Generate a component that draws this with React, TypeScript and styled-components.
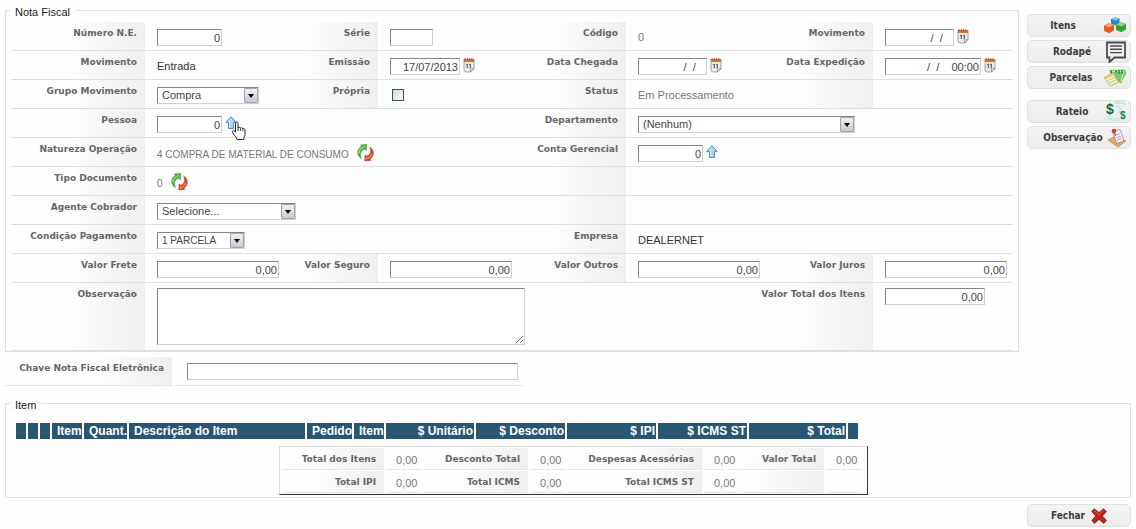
import React from "react";
import styled, { createGlobalStyle } from "styled-components";

const sans = `"Liberation Sans", Arial, sans-serif`;
const verdana = `"DejaVu Sans", Verdana, sans-serif`;

const GlobalStyle = createGlobalStyle`
  *, *::before, *::after { box-sizing: border-box; }
  body { margin: 0; background: #fefefe; color: #333; font: 11px/14px ${sans}; }
`;

const Page = styled.main`
  display: flex;
  flex-direction: column;
  padding: 0 5px;
`;

const Top = styled.div`
  display: flex;
  align-items: flex-start;
  gap: 8px;
`;

const Group = styled.fieldset`
  flex: 1;
  min-width: 0;
  margin: 2px 0 0;
  padding: 4px 5px 0;
  border: 1px solid #e0e0e0;
`;

const ItemGroup = styled(Group)`
  margin-top: 9px;
  padding: 12px 5px 2px;
`;

const Legend = styled.legend`
  margin-left: -1px;
  padding: 4px 5px 0;
  color: #222;
  font-size: 11px;
  line-height: 12px;
`;

const Row = styled.div<{ $tall?: boolean }>`
  display: grid;
  grid-template-columns:
    134px minmax(0, 135fr) 98px minmax(0, 144fr) 104px minmax(0, 134fr)
    113px minmax(0, 140fr);
  height: ${(p) => (p.$tall ? 68 : 29)}px;
  border-bottom: 1px solid #dedede;
`;

const labelLook = `
  padding: 4px 8px 0 0;
  background: linear-gradient(to left, #efefef, #fefefe 76px);
  color: #666;
  font: bold 9px/14px ${verdana};
  text-align: right;
  white-space: nowrap;
`;

const Label = styled.label`
  ${labelLook}
`;

const Caption = styled.span`
  ${labelLook}
`;

const Value = styled.div<{ $span?: number; $bottom?: boolean; $tight?: boolean }>`
  grid-column: span ${(p) => p.$span ?? 1};
  display: flex;
  align-items: ${(p) => (p.$bottom ? "flex-end" : "flex-start")};
  gap: ${(p) => (p.$bottom ? 8 : 3)}px;
  padding: ${(p) => (p.$bottom ? "4px 0 4px 12px" : p.$tight ? "5px 0 0 12px" : "7px 0 0 12px")};
  white-space: nowrap;
`;

const Text = styled.span<{ $dark?: boolean; $caps?: boolean }>`
  color: ${(p) => (p.$dark ? "#333" : "#777")};
  font-size: ${(p) => (p.$caps ? 10 : 11)}px;
  line-height: ${(p) => (p.$caps ? 14 : 17)}px;
`;

const boxLook = `
  margin: 0;
  border: 1px solid;
  border-color: #858585 #cfcfcf #cfcfcf #858585;
  border-radius: 0;
  background: #fff;
  color: #444;
`;

const Field = styled.input<{ $w: number }>`
  ${boxLook}
  width: ${(p) => p.$w}px;
  height: 17px;
  padding: 0 1px;
  font: 11px/15px ${sans};
  text-align: right;
`;

const Area = styled.textarea`
  ${boxLook}
  width: 368px;
  height: 57px;
  padding: 2px;
  font: 11px/14px ${sans};
`;

const Tick = styled.input`
  appearance: none;
  width: 12px;
  height: 12px;
  margin: 2px;
  border: 1px solid #2b567c;
  background: linear-gradient(135deg, #d9dbd8, #fbfbfb);
`;

const Picker = styled.span<{ $w: number }>`
  position: relative;
  display: block;
  width: ${(p) => p.$w}px;
  height: 17px;
`;

const Choice = styled.select<{ $caps?: boolean }>`
  ${boxLook}
  appearance: none;
  width: 100%;
  height: 17px;
  padding: 0 16px 0 4px;
  font: ${(p) => (p.$caps ? 10 : 11)}px/15px ${sans};
`;

const Drop = styled.span`
  position: absolute;
  top: 1px;
  right: 1px;
  display: grid;
  place-items: center;
  width: 14px;
  height: 15px;
  border: 1px solid #a3a3b0;
  border-radius: 1px;
  background: linear-gradient(#f1f1f4, #c9c9d4);
  pointer-events: none;
  &::after {
    content: "";
    border: 3px solid transparent;
    border-top: 4px solid #000;
    border-bottom: 0;
  }
`;

const IconButton = styled.button`
  position: relative;
  display: block;
  padding: 0;
  border: 0;
  background: none;
  line-height: 0;
  cursor: pointer;
`;

const Hand = styled.svg`
  position: absolute;
  top: 5px;
  left: 6px;
`;

const Side = styled.nav`
  display: flex;
  flex-direction: column;
  gap: 11px;
  width: 104px;
  padding-top: 14px;
`;

const SideGroup = styled.div`
  display: flex;
  flex-direction: column;
  gap: 3px;
`;

const buttonLook = `
  display: flex;
  align-items: center;
  width: 104px;
  height: 23px;
  border: 1px solid #e0e0e0;
  border-radius: 5px;
  background: linear-gradient(#f3f3f3, #ececec);
  color: #3c3c3c;
  font: bold 10px/14px "DejaVu Sans Condensed", "DejaVu Sans", Tahoma, sans-serif;
  cursor: pointer;
`;

const SideButton = styled.button<{ $gap?: number }>`
  ${buttonLook}
  padding: 0 3px 0 11px;
  span {
    flex: 1;
    padding-right: ${(p) => p.$gap ?? 0}px;
    text-align: center;
  }
  svg { flex: none; }
`;

const CloseButton = styled.button`
  ${buttonLook}
  justify-content: center;
  gap: 6px;
  align-self: flex-end;
  margin-top: 6px;
`;

const KeyRow = styled.div`
  display: flex;
  gap: 2px;
  height: 29px;
  margin-top: 5px;
`;

const KeyLabel = styled(Label)`
  width: 167px;
  border-bottom: 1px solid #e6e6e6;
`;

const KeyValue = styled.div`
  width: 349px;
  padding: 6px 0 0 13px;
  border-bottom: 1px solid #e6e6e6;
`;

const ItemBlock = styled.div`
  display: flex;
  flex-direction: column;
  gap: 7px;
  width: 854px;
  margin-left: 3px;
`;

const ItemTable = styled.table`
  width: 846px;
  table-layout: fixed;
  border-collapse: separate;
  border-spacing: 2px 0;
`;

const HeadCell = styled.th<{ $w: number; $right?: boolean }>`
  width: ${(p) => p.$w}px;
  height: 16px;
  padding: 0 ${(p) => (p.$right ? 1 : 0)}px 0 ${(p) => (p.$right ? 0 : 5)}px;
  background: #2a5672;
  color: #fff;
  font: bold 12px/16px ${sans};
  text-align: ${(p) => (p.$right ? "right" : "left")};
  white-space: nowrap;
`;

const Totals = styled.table`
  width: 589px;
  margin-left: auto;
  padding-right: 3px;
  table-layout: fixed;
  border: 1px solid;
  border-color: #dcdcdc #333 #333 #dcdcdc;
  border-collapse: separate;
  border-spacing: 2px 1px;
`;

const TotalLabel = styled.th<{ $w: number }>`
  ${labelLook}
  width: ${(p) => p.$w}px;
  height: 22px;
  padding-top: 0;
  border-bottom: 1px solid #e8e8e8;
`;

const TotalValue = styled.td`
  width: 36px;
  height: 22px;
  padding: 2px 0 0 10px;
  border-bottom: 1px solid #e8e8e8;
  color: #777;
  font: 11px/14px ${sans};
`;

const CalendarIcon = () => (
  <svg width="12" height="15" viewBox="0 0 12 15">
    <path d="M1 3.500h10v7L7.500 14H3.500a2.500 2.500 0 0 1-2.500-2.500z" fill="#ececea" stroke="#8b8b88" strokeWidth=".8" />
    <path d="M7.500 14c.3-1.500 0-2.500-.4-3.300 1.400.5 2.700.3 3.900-.2z" fill="#fff" stroke="#777" strokeWidth=".7" />
    <path d="M.6 1h10.800v3H.6z" fill="#d9743a" />
    <path d="M2 0v2.500M4.300 0v2.500M6.600 0v2.500M8.900 0v2.500" stroke="#a8481c" strokeWidth=".9" />
    <path d="M3.300 6.600l1-.6v4M6.300 6.600l1-.6v4" fill="none" stroke="#444" strokeWidth="1" />
  </svg>
);

const UpIcon = () => (
  <svg width="12" height="14" viewBox="0 0 12 14">
    <path d="M6 .8L11.200 6.500H8.500V12.500H3.500V6.500H.8z" fill="#a9d3f5" stroke="#4a8ccb" strokeLinejoin="round" />
    <path d="M6 2.500L3.500 5.500h1.200v6" fill="none" stroke="#e2f2ff" strokeWidth="1" />
  </svg>
);

const RefreshIcon = () => (
  <svg width="17" height="18" viewBox="0 0 17 18">
    <path d="M4.500 14.500C1.500 13 .2 10 .9 7 1.500 4.800 2.800 3.400 4.600 2.600L3.600 1 9.600.6 9.300 6.600 7.600 5.200C5.200 5.800 3.300 8 3.300 10.500c0 1.500.4 2.800 1.200 4z" fill="#58b544" stroke="#2f8a2a" strokeWidth=".6" strokeLinejoin="round" />
    <path d="M1.900 9C2 6 3.800 4.200 6.400 3.400l1.400-1.300" fill="none" stroke="#b5e6a0" strokeWidth="1" />
    <path d="M12.700 3.200c2.800 1.500 4.100 4.300 3.500 7.300-.5 2.200-1.700 3.600-3.400 4.400l1 1.500-6 .5.300-6 1.700 1.300c2.300-.8 3.800-2.700 3.900-5 .1-1.500-.3-2.800-1-4z" fill="#d94c2e" stroke="#b03018" strokeWidth=".6" strokeLinejoin="round" />
    <path d="M9.200 15.500l.2-1.500 1.800.3c1.700-.9 2.900-2.200 3.400-4.200" fill="none" stroke="#f7a98c" strokeWidth="1" />
  </svg>
);

const HandIcon = () => (
  <Hand width="16" height="20" viewBox="0 0 16 20" aria-hidden="true">
    <path d="M4.500 11V2.200C4.500.6 7 .6 7 2.200V7C7.300 5.800 9.300 6 9.400 7.300 9.900 6.300 11.700 6.700 11.800 8c.7-.8 2.200-.3 2.200 1v4.500c0 1.500-1.200 2.500-1.300 5H6c-.4-2.600-2.400-3.600-4.400-6.600-1-1.600.4-2.700 1.600-1.900z" fill="#fff" stroke="#222" strokeLinejoin="round" />
    <path d="M7 7v3M9.400 7.500V10M11.800 8.300v2" stroke="#222" strokeWidth=".9" />
  </Hand>
);

const CubesIcon = () => (
  <svg width="24" height="20" viewBox="0 0 24 20">
    <path d="M12 1.500l4.500 1v4.500l-4 2.500-4.500-2V3z" fill="#2586cf" />
    <path d="M12 1.500l4.500 1-4 2.200L8 3z" fill="#7cc4f3" />
    <path d="M5.500 7.200l5.500 1.600v5.400l-4.500 3L1 15V9.500z" fill="#e25a24" />
    <path d="M5.500 7.200L11 8.800l-4.500 2.700L1 9.500z" fill="#f8a173" />
    <path d="M17.500 6.200L23 7.800v5.400l-4.500 3-5.500-2.200V8.500z" fill="#37a02f" />
    <path d="M17.500 6.200L23 7.800l-4.500 2.700L13 8.500z" fill="#8fd67d" />
  </svg>
);

const SpeechIcon = () => (
  <svg width="22" height="22" viewBox="0 0 22 22">
    <path d="M2 1.500h18v15H9.500L4.500 21v-4.500H2z" fill="#f1f1f1" stroke="#4a4a4a" strokeWidth="1.800" />
    <path d="M5 5h12M5 8.300h12M5 11.600h12" stroke="#4a4a4a" strokeWidth="1.400" />
  </svg>
);

const MoneyIcon = () => (
  <svg width="24" height="20" viewBox="0 0 24 20">
    <path d="M6 2L21.500 1.500l2 3.500-5.500 10.500L9 11z" fill="#7cc767" />
    <path d="M8 3.500l12.500-.3-2.500 10" fill="none" stroke="#d3f0c5" strokeWidth="1" />
    <path d="M8.500 2.500v4M12 3.500h2M16 2v4M19 2v4" stroke="#2f7d2b" strokeWidth="1.300" />
    <path d="M1 9.500L10 5l5.500 9-8 4z" fill="#f3f1cc" stroke="#b4ab62" strokeWidth=".8" />
    <path d="M1 9.500L10 5l1.200 2-9 4.300z" fill="#dcca66" />
    <path d="M5 12.500l7-3.500M6.500 15l7-3.500" stroke="#a7c27a" strokeWidth=".9" />
  </svg>
);

const DollarsIcon = () => (
  <svg width="22" height="21" viewBox="0 0 22 21" aria-hidden="true">
    <path d="M9 2c6-1.500 10-.5 12 2M3 15c1 4 8 5 11 3M11 5c5 1 6 3 3 7" fill="none" stroke="#cdebd8" strokeWidth="3" />
    <text x="1" y="13" fontFamily="Liberation Sans" fontSize="14" fontWeight="bold" fill="#12693c">$</text>
    <text x="15" y="18" fontFamily="Liberation Sans" fontSize="10" fontWeight="bold" fill="#12884a">$</text>
  </svg>
);

const NoteIcon = () => (
  <svg width="20" height="20" viewBox="0 0 20 20">
    <path d="M1 12l8-4 10 5-8 6z" fill="#e9a765" stroke="#c27c3c" strokeWidth=".7" />
    <path d="M5 3l8-1.500 4 11-7 3z" fill="#f5f5fa" stroke="#8e8ea0" strokeWidth=".8" />
    <path d="M8 7l5-1M9 9.500l5-1M10 12l4.500-1.300" stroke="#9c9cb0" strokeWidth=".9" />
    <circle cx="7" cy="3" r="2.300" fill="#d8402f" />
    <path d="M7.500 5l1 3" stroke="#a33" strokeWidth="1" />
  </svg>
);

const CrossIcon = () => (
  <svg width="16" height="16" viewBox="0 0 16 16">
    <path d="M3 .8L8 4.600 12.500.8 15.400 3.600 11.400 8l4 4.600L12.700 15.400 8 11.400 3.500 15.400.8 12.500 4.600 8 .8 3.500z" fill="#b3261c" stroke="#8e1a14" strokeWidth=".8" strokeLinejoin="round" />
    <path d="M3 2.500L8 6.500l4.500-4" fill="none" stroke="#d9584a" strokeWidth="1" />
  </svg>
);

const Calendar = ({ name }: { name: string }) => (
  <IconButton type="button" aria-label={name}>
    <CalendarIcon />
  </IconButton>
);

type SelectProps = { id: string; w: number; option: string; caps?: boolean };
const Select = ({ id, w, option, caps }: SelectProps) => (
  <Picker $w={w}>
    <Choice id={id} $caps={caps}>
      <option>{option}</option>
    </Choice>
    <Drop />
  </Picker>
);

const columns: { text: string; w: number; right?: boolean }[] = [
  { text: "", w: 10 },
  { text: "", w: 10 },
  { text: "", w: 10 },
  { text: "Item", w: 30 },
  { text: "Quant.", w: 43 },
  { text: "Descrição do Item", w: 176 },
  { text: "Pedido", w: 45 },
  { text: "Item", w: 30 },
  { text: "$ Unitário", w: 88, right: true },
  { text: "$ Desconto", w: 89, right: true },
  { text: "$ IPI", w: 89, right: true },
  { text: "$ ICMS ST", w: 89, right: true },
  { text: "$ Total", w: 97, right: true },
  { text: "", w: 10 },
];

const totals: [string, string][][] = [
  [["Total dos Itens", "0,00"], ["Desconto Total", "0,00"], ["Despesas Acessórias", "0,00"], ["Valor Total", "0,00"]],
  [["Total IPI", "0,00"], ["Total ICMS", "0,00"], ["Total ICMS ST", "0,00"], ["", ""]],
];
const totalWidths = [102, 104, 134, 82];

export default function App() {
  return (
    <>
      <GlobalStyle />
      <Page>
        <Top>
          <Group>
            <Legend>Nota Fiscal</Legend>
            <Row>
              <Label htmlFor="numero">Número N.E.</Label>
              <Value><Field id="numero" $w={65} defaultValue="0" /></Value>
              <Label htmlFor="serie">Série</Label>
              <Value><Field id="serie" $w={43} /></Value>
              <Caption>Código</Caption>
              <Value><Text>0</Text></Value>
              <Label htmlFor="movimento">Movimento</Label>
              <Value>
                <Field id="movimento" $w={69} defaultValue="/  /   " />
                <Calendar name="Escolher data do movimento" />
              </Value>
            </Row>
            <Row>
              <Caption>Movimento</Caption>
              <Value><Text $dark>Entrada</Text></Value>
              <Label htmlFor="emissao">Emissão</Label>
              <Value>
                <Field id="emissao" $w={70} defaultValue="17/07/2013" />
                <Calendar name="Escolher data de emissão" />
              </Value>
              <Label htmlFor="chegada">Data Chegada</Label>
              <Value>
                <Field id="chegada" $w={69} defaultValue="/  /   " />
                <Calendar name="Escolher data de chegada" />
              </Value>
              <Label htmlFor="expedicao">Data Expedição</Label>
              <Value>
                <Field id="expedicao" $w={96} defaultValue="/  /    00:00" />
                <Calendar name="Escolher data de expedição" />
              </Value>
            </Row>
            <Row>
              <Label htmlFor="grupo">Grupo Movimento</Label>
              <Value><Select id="grupo" w={102} option="Compra" /></Value>
              <Label htmlFor="propria">Própria</Label>
              <Value><Tick id="propria" type="checkbox" /></Value>
              <Caption>Status</Caption>
              <Value><Text>Em Processamento</Text></Value>
              <Caption />
              <Value />
            </Row>
            <Row>
              <Label htmlFor="pessoa">Pessoa</Label>
              <Value $span={3}>
                <Field id="pessoa" $w={65} defaultValue="0" />
                <IconButton type="button" aria-label="Buscar pessoa">
                  <UpIcon />
                  <HandIcon />
                </IconButton>
              </Value>
              <Label htmlFor="departamento">Departamento</Label>
              <Value $span={3}><Select id="departamento" w={217} option="(Nenhum)" /></Value>
            </Row>
            <Row>
              <Caption>Natureza Operação</Caption>
              <Value $span={3} $bottom>
                <Text $caps>4 COMPRA DE MATERIAL DE CONSUMO</Text>
                <IconButton type="button" aria-label="Trocar natureza"><RefreshIcon /></IconButton>
              </Value>
              <Label htmlFor="conta">Conta Gerencial</Label>
              <Value $span={3}>
                <Field id="conta" $w={65} defaultValue="0" />
                <IconButton type="button" aria-label="Buscar conta"><UpIcon /></IconButton>
              </Value>
            </Row>
            <Row>
              <Caption>Tipo Documento</Caption>
              <Value $span={3} $bottom>
                <Text $caps>0</Text>
                <IconButton type="button" aria-label="Trocar tipo"><RefreshIcon /></IconButton>
              </Value>
              <Caption />
              <Value $span={3} />
            </Row>
            <Row>
              <Label htmlFor="agente">Agente Cobrador</Label>
              <Value $span={3}><Select id="agente" w={139} option="Selecione..." /></Value>
              <Caption />
              <Value $span={3} />
            </Row>
            <Row>
              <Label htmlFor="condicao">Condição Pagamento</Label>
              <Value $span={3}><Select id="condicao" w={88} option="1 PARCELA" caps /></Value>
              <Caption>Empresa</Caption>
              <Value $span={3}><Text $dark>DEALERNET</Text></Value>
            </Row>
            <Row>
              <Label htmlFor="frete">Valor Frete</Label>
              <Value><Field id="frete" $w={122} defaultValue="0,00" /></Value>
              <Label htmlFor="seguro">Valor Seguro</Label>
              <Value><Field id="seguro" $w={122} defaultValue="0,00" /></Value>
              <Label htmlFor="outros">Valor Outros</Label>
              <Value><Field id="outros" $w={122} defaultValue="0,00" /></Value>
              <Label htmlFor="juros">Valor Juros</Label>
              <Value><Field id="juros" $w={122} defaultValue="0,00" /></Value>
            </Row>
            <Row $tall>
              <Label htmlFor="observacao">Observação</Label>
              <Value $span={5} $tight><Area id="observacao" /></Value>
              <Label htmlFor="total-itens">Valor Total dos Itens</Label>
              <Value $tight><Field id="total-itens" $w={100} defaultValue="0,00" /></Value>
            </Row>
          </Group>
          <Side>
            <SideGroup>
              <SideButton type="button" $gap={16}><span>Itens</span><CubesIcon /></SideButton>
              <SideButton type="button"><span>Rodapé</span><SpeechIcon /></SideButton>
              <SideButton type="button"><span>Parcelas</span><MoneyIcon /></SideButton>
            </SideGroup>
            <SideGroup>
              <SideButton type="button"><span>Rateio</span><DollarsIcon /></SideButton>
              <SideButton type="button"><span>Observação</span><NoteIcon /></SideButton>
            </SideGroup>
          </Side>
        </Top>
        <KeyRow>
          <KeyLabel htmlFor="chave">Chave Nota Fiscal Eletrônica</KeyLabel>
          <KeyValue><Field id="chave" $w={331} /></KeyValue>
        </KeyRow>
        <ItemGroup>
          <Legend>Item</Legend>
          <ItemBlock>
            <ItemTable>
              <thead>
                <tr>
                  {columns.map((c, i) => (
                    <HeadCell key={i} scope="col" $w={c.w} $right={c.right}>{c.text}</HeadCell>
                  ))}
                </tr>
              </thead>
            </ItemTable>
            <Totals>
              <tbody>
                {totals.map((row, r) => (
                  <tr key={r}>
                    {row.map(([label, value], i) => (
                      <React.Fragment key={i}>
                        <TotalLabel scope="row" $w={totalWidths[i]}>{label}</TotalLabel>
                        <TotalValue>{value}</TotalValue>
                      </React.Fragment>
                    ))}
                  </tr>
                ))}
              </tbody>
            </Totals>
          </ItemBlock>
        </ItemGroup>
        <CloseButton type="button">Fechar<CrossIcon /></CloseButton>
      </Page>
    </>
  );
}
